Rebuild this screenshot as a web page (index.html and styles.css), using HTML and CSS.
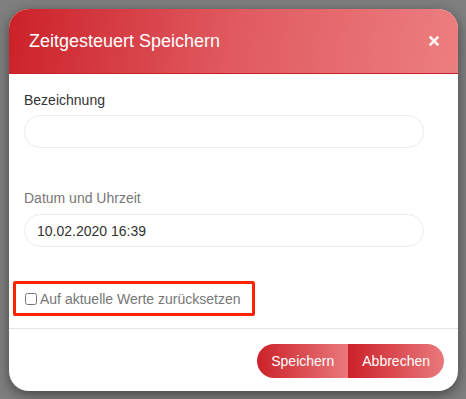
FILE: index.html
```html
<!DOCTYPE html>
<html lang="de">
    <head>
    <meta charset="utf-8">
    <title>Zeitgesteuert Speichern</title>
    <link rel="stylesheet" href="styles.css">
    </head>
    <body>
        <div class="modal">
            <div class="modal-header">
                <h4 class="modal-title">Zeitgesteuert Speichern</h4>
                <button type="button" class="close">
                    <svg width="10" height="10" viewBox="0 0 10 10"><path d="M1.5 1.5 L8.5 8.5 M8.5 1.5 L1.5 8.5" stroke="#fff" stroke-width="2.6" stroke-linecap="square"/></svg>
                </button>
            </div>
            <div class="modal-body">
                <div class="form-group">
                    <label class="label-dark" for="nameField">Bezeichnung</label>
                    <input type="text" id="nameField" class="form-control">
                </div>
                <div class="form-group">
                    <label for="dateField">Datum und Uhrzeit</label>
                    <input type="text" id="dateField" class="form-control" value="10.02.2020 16:39">
                </div>
                <!-- highlighted option -->
                <div class="check-box">
                    <input type="checkbox" id="resetField">
                    <label for="resetField">Auf aktuelle Werte zurücksetzen</label>
                </div>
            </div>
            <div class="modal-footer">
                <div class="btn-group">
                    <button type="button" class="btn">Speichern</button>
                    <button type="button" class="btn">Abbrechen</button>
                </div>
            </div>
        </div>
    </body>
</html>
```
FILE: styles.css
```css
html, body {
    margin: 0;
    height: 100%;
}

body {
    background-color: #7f7f7f;
    font-family: "Liberation Sans", Arial, sans-serif;
    font-size: 14px;
    padding: 9px;
    box-sizing: border-box;
}

.modal {
    width: 449px;
    height: 382px;
    background-color: #fff;
    border-radius: 20px;
    overflow: hidden;
    box-shadow: 0 4px 14px rgba(0, 0, 0, 0.45);
    display: flex;
    flex-direction: column;
}

.modal-header {
    height: 64px;
    border-bottom: 1px solid #c9222a;
    background: linear-gradient(100deg, #cc2129 0%, #e05a60 50%, #ec7f81 100%);
    display: flex;
    align-items: center;
    padding: 0 20px;
}

.modal-title {
    flex: 1;
    margin: 0;
    color: #fff;
    font-weight: normal;
    font-size: 18px;
    padding-top: 1px;
}

.close {
    background: none;
    border: none;
    padding: 0;
    margin-right: -1px;
    display: flex;
    opacity: 0.9;
}

.modal-body {
    padding: 16px 15px 0;
}

.form-group {
    margin-bottom: 40px;
}

.form-group label {
    display: block;
    line-height: 20px;
    color: #777;
    margin-bottom: 6px;
}

.form-group .label-dark {
    color: #333;
    margin-bottom: 5px;
}

.form-control {
    display: block;
    width: 400px;
    height: 33px;
    box-sizing: border-box;
    border: 1px solid #ececec;
    border-radius: 17px;
    padding: 0 12px;
    font-family: inherit;
    font-size: 14px;
    color: #333;
    outline: none;
}

.check-box {
    margin: -6px 0 0 -11px;
    width: 242px;
    height: 35px;
    box-sizing: border-box;
    border: 3px solid #ff2400;
    border-radius: 2px;
    display: flex;
    align-items: center;
    padding-left: 7px;
    color: #777;
}

.check-box input {
    width: 12px;
    height: 12px;
    margin: 0 3px 0 2px;
}

.modal-footer {
    margin-top: 12px;
    border-top: 1px solid #e5e5e5;
    padding: 15px 14px 0 0;
    display: flex;
    justify-content: flex-end;
}

.btn-group {
    display: flex;
    border-radius: 17px;
    overflow: hidden;
}

.btn {
    height: 34px;
    border: none;
    background: linear-gradient(90deg, #cc2129 0%, #e9797c 100%);
    color: #fff;
    font-family: inherit;
    font-size: 14px;
    padding: 0 14px;
}
```
